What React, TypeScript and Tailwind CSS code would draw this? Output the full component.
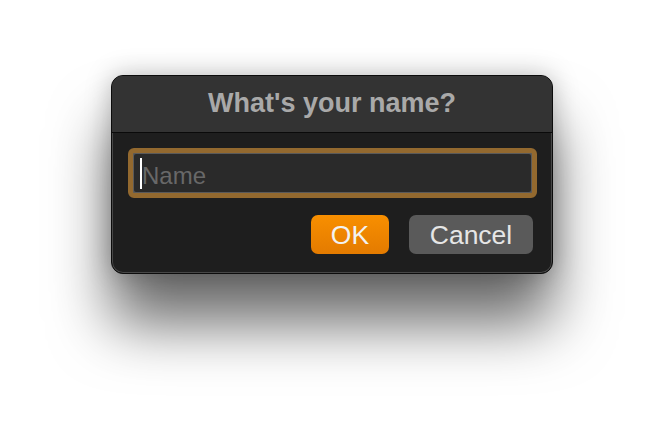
export default function App() {
  return (
    <div className="h-[422px] w-[664px] overflow-hidden bg-white font-['Liberation_Sans',Arial,sans-serif]">
      <div className="ml-[111px] mt-[75px] flex h-[199px] w-[442px] flex-col overflow-hidden rounded-[12px] border border-[#0c0c0c] bg-[#1e1e1e] shadow-[inset_0_0_0_1px_#474747,0_50px_60px_rgba(0,0,0,0.58),0_0_26px_rgba(0,0,0,0.25)]">
        <div className="flex h-[57px] shrink-0 items-center justify-center border-b border-[#0a0a0a] bg-[#333333] pb-[2px]">
          <h1 className="text-[27px] font-bold leading-none text-[#a9a9a9]">What's your name?</h1>
        </div>

        <div className="flex flex-col px-[16px] pt-[15px]">
          <div className="h-[50px] w-[409px] rounded-[6px] border-[5px] border-[#93692f] bg-[#5a5a5a] p-px">
            <div className="flex h-full items-center rounded-[2px] bg-[#2a2a2a] pl-[6px]">
              <span className="mt-[1px] h-[31px] w-[2px] bg-white" />
              <span className="pt-[5px] text-[24px] leading-none text-[#686868]">Name</span>
            </div>
          </div>

          <div className="mt-[17px] flex justify-end gap-[20px] pr-[3px]">
            <button className="flex h-[39px] w-[78px] items-center justify-center rounded-[7px] bg-gradient-to-b from-[#f88f00] to-[#e47b00] pt-[2px] text-[26.5px] leading-none text-[#f2f2f2]">
              OK
            </button>
            <button className="flex h-[39px] w-[124px] items-center justify-center rounded-[7px] bg-[#5a5a5a] pt-[2px] text-[26.5px] leading-none text-[#e6e6e6]">
              Cancel
            </button>
          </div>
        </div>
      </div>
    </div>
  );
}
